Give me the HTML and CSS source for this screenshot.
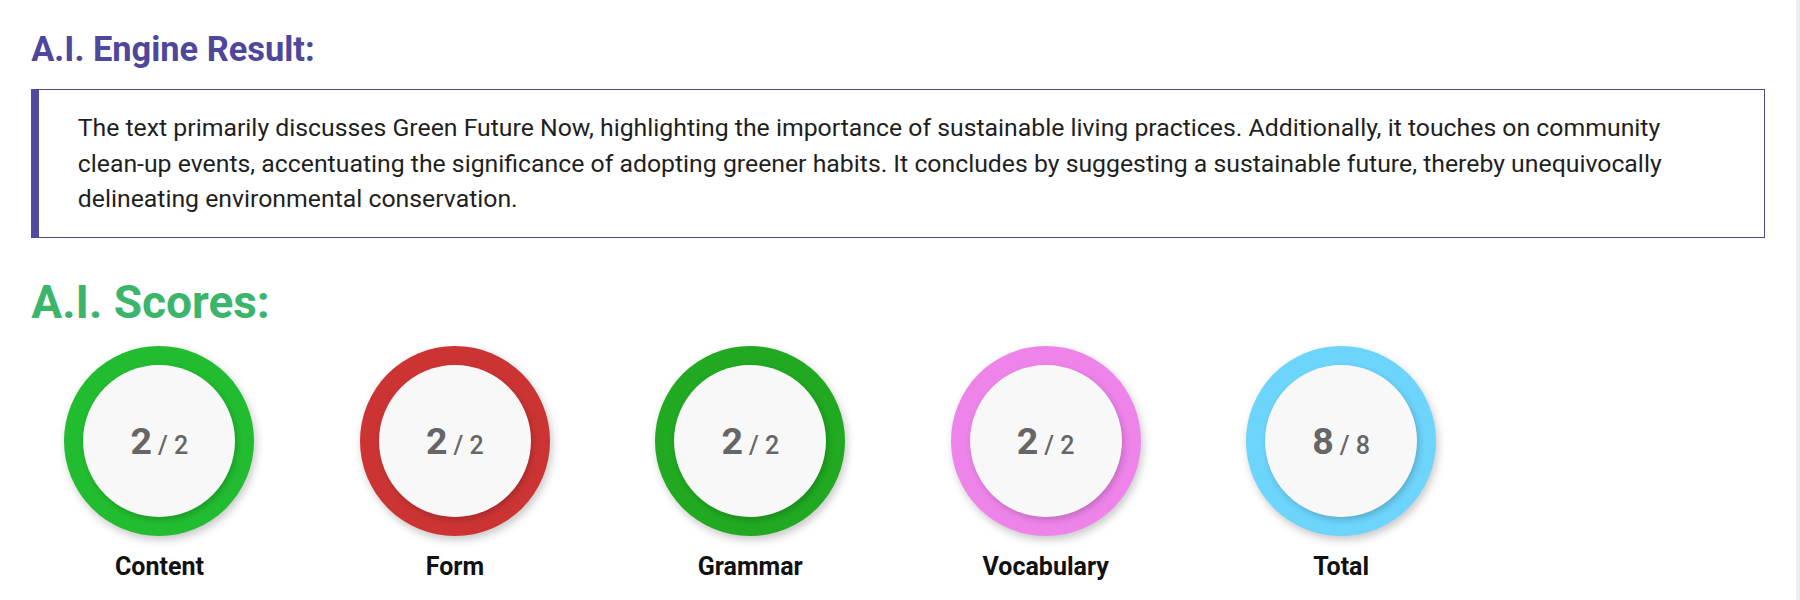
FILE: index.html
```html
<!DOCTYPE html>
<html lang="en">
<head>
<meta charset="utf-8">
<title>A.I. Engine Result</title>
<link rel="stylesheet" href="styles.css">
</head>
<body>
<main class="page">
  <h1 class="result-title">A.I. Engine Result:</h1>
  <blockquote class="result-box">
    The text primarily discusses Green Future Now, highlighting the importance of sustainable living practices. Additionally, it touches on community clean-up events, accentuating the significance of adopting greener habits. It concludes by suggesting a sustainable future, thereby unequivocally delineating environmental conservation.
  </blockquote>
  <h2 class="scores-title">A.I. Scores:</h2>
  <div class="scores">
    <div class="score">
      <div class="ring ring-content"><div class="dial"><span class="value"><span class="got">2</span> <span class="max">/ 2</span></span></div></div>
      <div class="label">Content</div>
    </div>
    <div class="score">
      <div class="ring ring-form"><div class="dial"><span class="value"><span class="got">2</span> <span class="max">/ 2</span></span></div></div>
      <div class="label">Form</div>
    </div>
    <div class="score">
      <div class="ring ring-grammar"><div class="dial"><span class="value"><span class="got">2</span> <span class="max">/ 2</span></span></div></div>
      <div class="label">Grammar</div>
    </div>
    <div class="score">
      <div class="ring ring-vocab"><div class="dial"><span class="value"><span class="got">2</span> <span class="max">/ 2</span></span></div></div>
      <div class="label">Vocabulary</div>
    </div>
    <div class="score">
      <div class="ring ring-total"><div class="dial"><span class="value"><span class="got">8</span> <span class="max">/ 8</span></span></div></div>
      <div class="label">Total</div>
    </div>
  </div>
</main>
</body>
</html>
```

FILE: styles.css
```css
html {
  background: #eeeef2;
}
body {
  margin: 0 4px 0 0;
  min-height: 600px;
  background: #ffffff;
  font-family: Roboto, "Liberation Sans", Arial, sans-serif;
  color: #1c1c1c;
}
.page {
  padding: 0 31.25px;
  overflow: hidden;
}
.result-title {
  margin: 30.8px 0 20.3px;
  font-size: 34.4px;
  line-height: 1.1;
  font-weight: 700;
  color: #4e479c;
}
.result-box {
  margin: 0;
  padding: 20px 40px 20px 38.5px;
  border: 1px solid #4f4a7e;
  border-left: 8.75px solid #5049a0;
  font-size: 24.8px;
  line-height: 1.44;
  color: #1f1f1f;
}
.scores-title {
  margin: 38.9px 0 0;
  font-size: 46px;
  line-height: 1.1;
  font-weight: 700;
  color: #3cb56c;
}
.scores {
  display: grid;
  grid-template-columns: repeat(6, 1fr);
  margin: 18px -19.5px 0;
}
.score {
  display: flex;
  flex-direction: column;
  align-items: center;
}
.ring {
  width: 190px;
  height: 190px;
  box-sizing: border-box;
  padding: 19px;
  border-radius: 50%;
  box-shadow: 2px 4px 8px rgba(0, 0, 0, 0.22);
}
.ring-content { background: #22bc30; }
.ring-form { background: #cc3434; }
.ring-grammar { background: #20a921; }
.ring-vocab { background: #ee84ea; }
.ring-total { background: #6dd4fb; }
.dial {
  width: 100%;
  height: 100%;
  border-radius: 50%;
  background: #f8f8f8;
  box-shadow: 2px 3px 6px rgba(0, 0, 0, 0.18);
  display: flex;
  align-items: center;
  justify-content: center;
  color: #666666;
}
.value {
  display: block;
  line-height: 1;
  padding-top: 2px;
  white-space: nowrap;
}
.got {
  font-size: 37.5px;
  font-weight: 700;
}
.max {
  margin-left: 2px;
  font-size: 25px;
  font-weight: 500;
}
.label {
  margin-top: 16px;
  font-size: 25px;
  line-height: 1.2;
  font-weight: 700;
  color: #111111;
}
```
